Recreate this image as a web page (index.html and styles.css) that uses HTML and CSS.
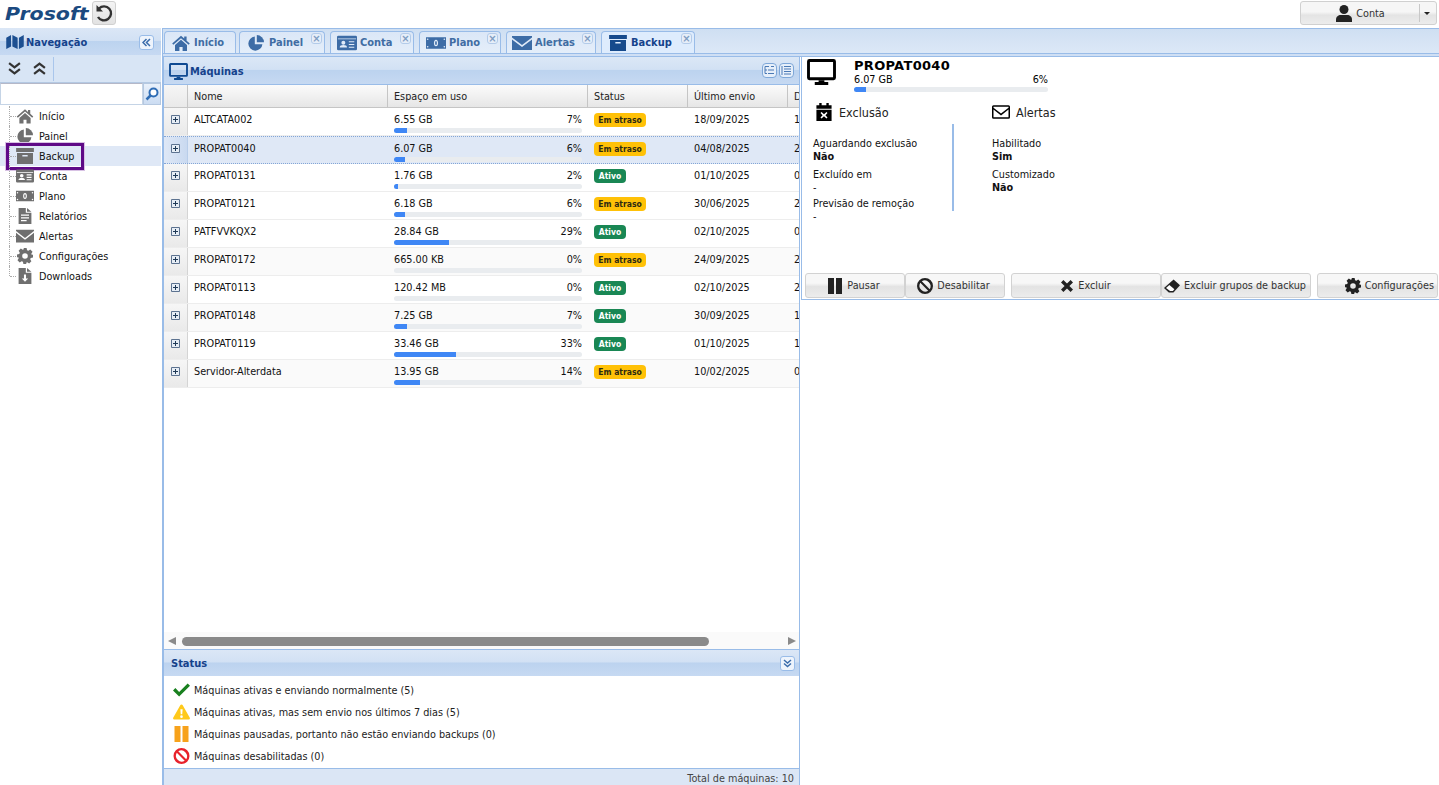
FILE: index.html
```html
<!DOCTYPE html>
<html lang="pt-BR">
<head>
<meta charset="utf-8">
<title>Prosoft Backup</title>
<link rel="stylesheet" href="styles.css">
</head>
<body>
<svg class="defs" width="0" height="0" aria-hidden="true">
  <symbol id="i-home" viewBox="0 0 24 20"><path d="M12 1 1 10.500l1.400 1.700L12 4l9.600 8.200 1.400-1.700-4-3.400V2h-3v2.500z"/><path d="M4.500 12.500 12 6l7.500 6.500V20H14v-5h-4v5H4.500z"/></symbol>
  <symbol id="i-pie" viewBox="0 0 20 20"><path d="M8.500 2a8.800 8.800 0 1 0 9.500 9.500H8.500z"/><path d="M11 0v9h9a9.200 9.200 0 0 0-9-9z"/></symbol>
  <symbol id="i-card" viewBox="0 0 22 16"><path fill-rule="evenodd" d="M1.500 0h19A1.500 1.500 0 0 1 22 1.500v13a1.500 1.500 0 0 1-1.500 1.500h-19A1.500 1.500 0 0 1 0 14.500v-13A1.500 1.500 0 0 1 1.500 0zM1 3v1h20V3zm6 2.500a2.200 2.200 0 1 0 0 4.400 2.200 2.200 0 0 0 0-4.400zM3 13h8c0-2-1.500-2.700-4-2.700S3 11 3 13zm10-7v1.300h6V6zm0 3v1.300h6V9zm0 3v1.300h6V12z"/></symbol>
  <symbol id="i-money" viewBox="0 0 24 14"><path fill-rule="evenodd" d="M0 0h24v14H0zm2 1.500a1 1 0 1 0 0 2 1 1 0 0 0 0-2zm20 0a1 1 0 1 0 0 2 1 1 0 0 0 0-2zm-20 9a1 1 0 1 0 0 2 1 1 0 0 0 0-2zm20 0a1 1 0 1 0 0 2 1 1 0 0 0 0-2zM12 3c-1.600 0-2.500 1.700-2.500 4s.9 4 2.500 4 2.500-1.700 2.500-4-.9-4-2.500-4zm0 1.500c.6 0 1 1 1 2.500s-.4 2.500-1 2.500-1-1-1-2.500.4-2.500 1-2.500z"/></symbol>
  <symbol id="i-mail" viewBox="0 0 24 17"><path d="M0 0h24v1.800L12 11 0 1.800z"/><path d="M0 4.200V17h24V4.200L12 13.400z"/></symbol>
  <symbol id="i-mail-o" viewBox="0 0 24 18"><path fill-rule="evenodd" d="M2 0h20a2 2 0 0 1 2 2v14a2 2 0 0 1-2 2H2a2 2 0 0 1-2-2V2a2 2 0 0 1 2-2zm0 2v1.300l10 7.700 10-7.700V2zm0 3.800V16h20V5.800l-10 7.700z"/></symbol>
  <symbol id="i-box" viewBox="0 0 20 18"><path d="M0 0h20v4.500H0z"/><path fill-rule="evenodd" d="M1 5.500h18V18H1zm6 2.500v1.600h6V8z"/></symbol>
  <symbol id="i-desktop" viewBox="0 0 30 27"><path fill-rule="evenodd" d="M2.500 0h25A2.500 2.500 0 0 1 30 2.500v17a2.500 2.500 0 0 1-2.500 2.500h-25A2.500 2.500 0 0 1 0 19.500v-17A2.500 2.500 0 0 1 2.500 0zM3 3v16h24V3z"/><path d="M12 22h6v2h4v3H8v-3h4z"/></symbol>
  <symbol id="i-map" viewBox="0 0 20 16"><path d="M0 3 5.500 0v13L0 16zM7 0l6 3v13l-6-3zM14.500 3 20 0v13l-5.500 3z"/></symbol>
  <symbol id="i-report" viewBox="0 0 16 20"><path fill-rule="evenodd" d="M0 0h9v6h7v14H0zm3 8v1.600h10V8zm0 3.500v1.600h10v-1.600zM3 15v1.600h7V15z"/><path d="M10.500 0 16 4.800h-5.500z"/></symbol>
  <symbol id="i-down" viewBox="0 0 16 20"><path fill-rule="evenodd" d="M0 0h9v6h7v14H0zm6.700 8v5H4l4 4.300 4-4.300H9.300V8z"/><path d="M10.500 0 16 4.800h-5.500z"/></symbol>
  <symbol id="i-gear" viewBox="0 0 20 20"><path fill-rule="evenodd" d="M8 0h4l.6 2.800 1.600.7 2.400-1.500 2.800 2.800-1.500 2.400.7 1.600L20 8v4l-2.800.6-.7 1.600 1.500 2.400-2.800 2.800-2.400-1.500-1.600.7L12 20H8l-.6-2.800-1.600-.7L3.400 18l-2.800-2.800 1.500-2.400-.7-1.600L0 12V8l2.800-.6.7-1.600L2 3.400 4.800.6l2.400 1.500 1.600-.7zM10 6.500a3.500 3.500 0 1 0 0 7 3.500 3.500 0 0 0 0-7z"/></symbol>
  <symbol id="i-cal" viewBox="0 0 16 19"><path d="M3 0h2.500v2.500h5V0H13v2.500h3V6H0V2.500h3z"/><path fill-rule="evenodd" d="M0 7h16v12H0zM5.400 9.500 4.300 10.600 6.500 12.900l-2.200 2.300 1.100 1.100L8 14l2.600 2.300 1.100-1.100-2.200-2.300 2.200-2.300-1.100-1.100L8 11.800z"/></symbol>
  <symbol id="i-pause" viewBox="0 0 16 16"><path d="M1 0h6v16H1zM9 0h6v16H9z"/></symbol>
  <symbol id="i-ban" viewBox="0 0 18 18"><path fill-rule="evenodd" d="M9 0a9 9 0 1 1 0 18A9 9 0 0 1 9 0zM3.700 5.400A6.500 6.500 0 0 0 12.600 14.300zM5.400 3.700l8.900 8.900A6.500 6.500 0 0 0 5.400 3.700z"/></symbol>
  <symbol id="i-x" viewBox="0 0 14 14"><path d="M2.800 0 7 4.200 11.200 0 14 2.800 9.800 7l4.200 4.200-2.800 2.800L7 9.800 2.800 14 0 11.200 4.200 7 0 2.800z"/></symbol>
  <symbol id="i-eraser" viewBox="0 0 20 16"><path d="M12 0 20 7l-8.200 9H6L0 10.500z"/><path fill="#fff" d="M7.600 14.400h3.500l1.900-2.200-6.300-5.300-4.200 3.700z"/></symbol>
  <symbol id="i-user" viewBox="0 0 16 17"><circle cx="8" cy="4.500" r="4.500"/><path d="M0 17v-2.500C0 11.500 2.500 10 4.500 10h7c2 0 4.500 1.500 4.500 4.500V17z"/></symbol>
  <symbol id="i-check" viewBox="0 0 18 14"><path d="M6.500 14 0 7.500l2.500-2.500 4 4L15.500 0 18 2.500z"/></symbol>
  <symbol id="i-warn" viewBox="0 0 18 16"><path fill-rule="evenodd" d="M9 0c.6 0 1 .3 1.300.8l7.500 13.300c.4.800-.1 1.900-1.200 1.900H1.400C.3 16-.2 14.900.2 14.100L7.700.8C8 .3 8.400 0 9 0zM7.800 5l.4 5.500h1.600l.4-5.500zM9 11.500a1.400 1.400 0 1 0 0 2.800 1.400 1.400 0 0 0 0-2.800z"/></symbol>
  <symbol id="i-plus" viewBox="0 0 9 9"><path fill="#e6edf5" stroke="#5d7390" d="M.5.500h8v8h-8z"/><path fill="#1f3a57" d="M2 4h2V2h1v2h2v1H5v2H4V5H2z"/></symbol>
  <symbol id="i-dbl-left" viewBox="0 0 9 9"><path fill="none" stroke="currentColor" stroke-width="1.500" d="M4.500 1 1 4.500 4.500 8M8 1 4.500 4.500 8 8"/></symbol>
  <symbol id="i-dbl-down" viewBox="0 0 9 9"><path fill="none" stroke="currentColor" stroke-width="1.500" d="M1 1l3.500 3L8 1M1 4.500l3.500 3 3.500-3"/></symbol>
</svg>

<div class="app">
  <header class="topbar">
    <span class="logo">Prosoft</span>
    <button class="refresh" aria-label="Atualizar">
      <svg viewBox="0 0 20 20" width="20" height="20"><path d="M5 5.500A7 7 0 1 1 4 14" fill="none" stroke="#333" stroke-width="2.400"/><path fill="#333" d="M2.500 2v6.500H9z"/></svg>
    </button>
    <div class="account">
      <span class="account-main"><svg class="ic16"><use href="#i-user"/></svg>Conta</span>
      <span class="account-caret"></span>
    </div>
  </header>

  <div class="workspace">
    <aside class="nav">
      <div class="panel-head nav-head">
        <svg class="nav-map"><use href="#i-map"/></svg>
        <span class="head-title">Navegação</span>
        <span class="tool-btn"><svg class="tool-ic"><use href="#i-dbl-left"/></svg></span>
      </div>
      <div class="nav-tools">
        <svg class="chev" viewBox="0 0 12 12"><path d="M1 1l5 4 5-4M1 6.500l5 4 5-4" fill="none" stroke="#333" stroke-width="2"/></svg>
        <svg class="chev" viewBox="0 0 12 12"><path d="M1 5.500l5-4 5 4M1 11l5-4 5 4" fill="none" stroke="#333" stroke-width="2"/></svg>
        <span class="nav-sep"></span>
      </div>
      <div class="search">
        <span class="search-input"></span>
        <span class="search-btn"><svg viewBox="0 0 14 14" width="14" height="14"><circle cx="8.500" cy="5.500" r="4" fill="#fff" stroke="#2f6db5" stroke-width="2"/><path d="M5.500 8.500 1.500 12.500" stroke="#2f6db5" stroke-width="2.500"/></svg></span>
      </div>
      <ul class="tree">
        <li class="tree-row"><svg class="tree-ic"><use href="#i-home"/></svg>Início</li>
        <li class="tree-row"><svg class="tree-ic"><use href="#i-pie"/></svg>Painel</li>
        <li class="tree-row is-active"><svg class="tree-ic"><use href="#i-box"/></svg>Backup<span class="highlight"></span></li>
        <li class="tree-row"><svg class="tree-ic"><use href="#i-card"/></svg>Conta</li>
        <li class="tree-row"><svg class="tree-ic"><use href="#i-money"/></svg>Plano</li>
        <li class="tree-row"><svg class="tree-ic"><use href="#i-report"/></svg>Relatórios</li>
        <li class="tree-row"><svg class="tree-ic"><use href="#i-mail"/></svg>Alertas</li>
        <li class="tree-row"><svg class="tree-ic"><use href="#i-gear"/></svg>Configurações</li>
        <li class="tree-row is-last"><svg class="tree-ic"><use href="#i-down"/></svg>Downloads</li>
      </ul>
    </aside>

    <main class="main">
      <nav class="tabs">
        <div class="tab t-inicio"><svg class="tab-ic"><use href="#i-home"/></svg>Início</div>
        <div class="tab t-painel"><svg class="tab-ic"><use href="#i-pie"/></svg>Painel<span class="tab-x"></span></div>
        <div class="tab t-conta"><svg class="tab-ic"><use href="#i-card"/></svg>Conta<span class="tab-x"></span></div>
        <div class="tab t-plano"><svg class="tab-ic"><use href="#i-money"/></svg>Plano<span class="tab-x"></span></div>
        <div class="tab t-alertas"><svg class="tab-ic"><use href="#i-mail"/></svg>Alertas<span class="tab-x"></span></div>
        <div class="tab t-backup is-active"><svg class="tab-ic"><use href="#i-box"/></svg>Backup<span class="tab-x"></span></div>
      </nav>
      <div class="tab-strip"></div>
      <div class="content">
        <section class="machines">
          <div class="panel-head list-head">
            <svg class="head-ic"><use href="#i-desktop"/></svg>
            <span class="head-title">Máquinas</span>
            <span class="view-btns">
              <span class="view-btn"><svg viewBox="0 0 11 11" width="11" height="11"><path d="M1 1.500h4M1 1.500v7M1 5h2m1 0h6M1 8.500h2m1 0h6M7 1.500h3" fill="none" stroke="#4a79b5"/></svg></span>
              <span class="view-btn"><svg viewBox="0 0 11 11" width="11" height="11"><path d="M1 1v9M3 1.500h7M3 4h7M3 6.500h7M3 9h7" fill="none" stroke="#4a79b5"/></svg></span>
            </span>
          </div>
          <div class="grid">
            <div class="grid-row grid-header">
              <div class="cell-exp"></div>
              <div class="hcell">Nome</div>
              <div class="hcell">Espaço em uso</div>
              <div class="hcell">Status</div>
              <div class="hcell">Último envio</div>
              <div class="hcell">D</div>
            </div>

            <div class="grid-row">
              <div class="cell-exp"><svg class="plus"><use href="#i-plus"/></svg></div>
              <div class="cell">ALTCATA002</div>
              <div class="cell"><div class="usage"><span>6.55 GB</span><span>7%</span></div><div class="bar"><div class="fill" style="width:7%"></div></div></div>
              <div class="cell"><span class="badge late">Em atraso</span></div>
              <div class="cell">18/09/2025</div>
              <div class="cell">1</div>
            </div>
            <div class="grid-row is-selected">
              <div class="cell-exp"><svg class="plus"><use href="#i-plus"/></svg></div>
              <div class="cell">PROPAT0040</div>
              <div class="cell"><div class="usage"><span>6.07 GB</span><span>6%</span></div><div class="bar"><div class="fill" style="width:6%"></div></div></div>
              <div class="cell"><span class="badge late">Em atraso</span></div>
              <div class="cell">04/08/2025</div>
              <div class="cell">2</div>
            </div>
            <div class="grid-row">
              <div class="cell-exp"><svg class="plus"><use href="#i-plus"/></svg></div>
              <div class="cell">PROPAT0131</div>
              <div class="cell"><div class="usage"><span>1.76 GB</span><span>2%</span></div><div class="bar"><div class="fill" style="width:2%"></div></div></div>
              <div class="cell"><span class="badge ok">Ativo</span></div>
              <div class="cell">01/10/2025</div>
              <div class="cell">0</div>
            </div>
            <div class="grid-row">
              <div class="cell-exp"><svg class="plus"><use href="#i-plus"/></svg></div>
              <div class="cell">PROPAT0121</div>
              <div class="cell"><div class="usage"><span>6.18 GB</span><span>6%</span></div><div class="bar"><div class="fill" style="width:6%"></div></div></div>
              <div class="cell"><span class="badge late">Em atraso</span></div>
              <div class="cell">30/06/2025</div>
              <div class="cell">2</div>
            </div>
            <div class="grid-row">
              <div class="cell-exp"><svg class="plus"><use href="#i-plus"/></svg></div>
              <div class="cell">PATFVVKQX2</div>
              <div class="cell"><div class="usage"><span>28.84 GB</span><span>29%</span></div><div class="bar"><div class="fill" style="width:29%"></div></div></div>
              <div class="cell"><span class="badge ok">Ativo</span></div>
              <div class="cell">02/10/2025</div>
              <div class="cell">0</div>
            </div>
            <div class="grid-row">
              <div class="cell-exp"><svg class="plus"><use href="#i-plus"/></svg></div>
              <div class="cell">PROPAT0172</div>
              <div class="cell"><div class="usage"><span>665.00 KB</span><span>0%</span></div><div class="bar"><div class="fill" style="width:0"></div></div></div>
              <div class="cell"><span class="badge late">Em atraso</span></div>
              <div class="cell">24/09/2025</div>
              <div class="cell">2</div>
            </div>
            <div class="grid-row">
              <div class="cell-exp"><svg class="plus"><use href="#i-plus"/></svg></div>
              <div class="cell">PROPAT0113</div>
              <div class="cell"><div class="usage"><span>120.42 MB</span><span>0%</span></div><div class="bar"><div class="fill" style="width:0"></div></div></div>
              <div class="cell"><span class="badge ok">Ativo</span></div>
              <div class="cell">02/10/2025</div>
              <div class="cell">2</div>
            </div>
            <div class="grid-row">
              <div class="cell-exp"><svg class="plus"><use href="#i-plus"/></svg></div>
              <div class="cell">PROPAT0148</div>
              <div class="cell"><div class="usage"><span>7.25 GB</span><span>7%</span></div><div class="bar"><div class="fill" style="width:7%"></div></div></div>
              <div class="cell"><span class="badge ok">Ativo</span></div>
              <div class="cell">30/09/2025</div>
              <div class="cell">1</div>
            </div>
            <div class="grid-row">
              <div class="cell-exp"><svg class="plus"><use href="#i-plus"/></svg></div>
              <div class="cell">PROPAT0119</div>
              <div class="cell"><div class="usage"><span>33.46 GB</span><span>33%</span></div><div class="bar"><div class="fill" style="width:33%"></div></div></div>
              <div class="cell"><span class="badge ok">Ativo</span></div>
              <div class="cell">01/10/2025</div>
              <div class="cell">1</div>
            </div>
            <div class="grid-row">
              <div class="cell-exp"><svg class="plus"><use href="#i-plus"/></svg></div>
              <div class="cell">Servidor-Alterdata</div>
              <div class="cell"><div class="usage"><span>13.95 GB</span><span>14%</span></div><div class="bar"><div class="fill" style="width:14%"></div></div></div>
              <div class="cell"><span class="badge late">Em atraso</span></div>
              <div class="cell">10/02/2025</div>
              <div class="cell">0</div>
            </div>
          </div>
          <div class="hscroll">
            <span class="arrow-l"></span>
            <span class="thumb"></span>
            <span class="arrow-r"></span>
          </div>
          <div class="panel-head status-head">
            <span class="head-title">Status</span>
            <span class="tool-btn"><svg class="tool-ic"><use href="#i-dbl-down"/></svg></span>
          </div>
          <ul class="legend">
            <li><svg class="lg-ic c-green"><use href="#i-check"/></svg>Máquinas ativas e enviando normalmente (5)</li>
            <li><svg class="lg-ic c-yellow"><use href="#i-warn"/></svg>Máquinas ativas, mas sem envio nos últimos 7 dias (5)</li>
            <li><svg class="lg-ic c-orange"><use href="#i-pause"/></svg>Máquinas pausadas, portanto não estão enviando backups (0)</li>
            <li><svg class="lg-ic c-red"><use href="#i-ban"/></svg>Máquinas desabilitadas (0)</li>
          </ul>
          <div class="total">Total de máquinas: 10</div>
        </section>

        <div class="detail-col">
          <section class="detail">
            <div class="detail-top">
              <svg class="detail-monitor"><use href="#i-desktop"/></svg>
              <div class="detail-summary">
                <div class="detail-name">PROPAT0040</div>
                <div class="usage"><span>6.07 GB</span><span>6%</span></div>
                <div class="bar"><div class="fill" style="width:6%"></div></div>
              </div>
            </div>
            <div class="detail-cols">
              <div class="dcol dcol-left">
                <h3 class="dhead"><svg class="dhead-ic"><use href="#i-cal"/></svg>Exclusão</h3>
                <div class="dlist">
                  <div class="ditem"><div>Aguardando exclusão</div><strong>Não</strong></div>
                  <div class="ditem"><div>Excluído em</div><div>-</div></div>
                  <div class="ditem"><div>Previsão de remoção</div><div>-</div></div>
                </div>
              </div>
              <div class="dcol dcol-right">
                <h3 class="dhead"><svg class="dhead-ic mail"><use href="#i-mail-o"/></svg>Alertas</h3>
                <div class="dlist">
                  <div class="ditem"><div>Habilitado</div><strong>Sim</strong></div>
                  <div class="ditem"><div>Customizado</div><strong>Não</strong></div>
                </div>
              </div>
            </div>
            <div class="actions">
              <button class="btn b-pause"><svg class="btn-ic"><use href="#i-pause"/></svg>Pausar</button>
              <button class="btn b-dis"><svg class="btn-ic"><use href="#i-ban"/></svg>Desabilitar</button>
              <button class="btn b-del"><svg class="btn-ic small"><use href="#i-x"/></svg>Excluir</button>
              <button class="btn b-grp"><svg class="btn-ic"><use href="#i-eraser"/></svg>Excluir grupos de backup</button>
              <button class="btn b-cfg"><svg class="btn-ic"><use href="#i-gear"/></svg>Configurações</button>
            </div>
          </section>
        </div>
      </div>
    </main>
  </div>
</div>
</body>
</html>
```
FILE: styles.css
```css
* { box-sizing: border-box; }
html, body { margin: 0; padding: 0; height: 100%; overflow: hidden; background: #fff; }
body { font: 10.750px/13px "DejaVu Sans Condensed", "DejaVu Sans", sans-serif; color: #000; }
ul { list-style: none; margin: 0; padding: 0; }
h3 { margin: 0; font-weight: normal; }
button { font: inherit; margin: 0; cursor: pointer; }
svg { fill: currentColor; display: block; flex: none; }
.defs { position: absolute; }

.app { height: 785px; display: flex; flex-direction: column; }

/* top bar */
.topbar { height: 28px; display: flex; align-items: center; padding-left: 5px; flex: none; }
.logo { font: italic bold 18px/28px "DejaVu Sans", sans-serif; color: #1b4a80; width: 87px; transform: scaleX(1.140); transform-origin: left center; }
.refresh { width: 24px; height: 24px; padding: 1px; margin-top: -2px; background: linear-gradient(#f4f4f4, #e2e2e2); border: 1px solid #d0d0d0; border-radius: 3px; display: flex; align-items: center; justify-content: center; }
.account { margin-left: auto; margin-right: 2px; width: 137px; height: 24px; margin-top: -2px; display: flex; align-items: center; background: linear-gradient(#f6f6f6 0 45%, #e4e4e4 60%, #ececec); border: 1px solid #d0d0d0; border-radius: 3px; color: #333; }
.account-main { flex: 1; display: flex; justify-content: center; align-items: center; gap: 4px; border-right: 1px solid #c8c8c8; height: 18px; padding-left: 1px; }
.ic16 { width: 16px; height: 17px; color: #222; }
.account-caret { width: 16px; position: relative; height: 18px; }
.account-caret::after { content: ""; position: absolute; left: 4px; top: 8px; border: 3px solid transparent; border-top: 3px solid #222; border-bottom: 0; width: 0; }

.workspace { flex: 1; display: flex; min-height: 0; }

/* shared panel header */
.panel-head { display: flex; align-items: center; background: linear-gradient(#dbe7f6 0, #d2e1f4 46%, #bcd3ef 50%, #c6d9f2 100%); flex: none; }
.head-title { font-weight: bold; font-size: 11px; color: #15428b; }
.tool-btn { width: 15px; height: 15px; margin-left: auto; border: 1px solid #99bce8; border-radius: 3px; background: #eef4fc; color: #3a6cab; display: flex; align-items: center; justify-content: center; }
.tool-ic { width: 9px; height: 9px; fill: none; }

/* navigation */
.nav { width: 161px; flex: none; display: flex; flex-direction: column; }
.nav-head { height: 27px; padding: 1px 7px 0 6px; }
.nav-map { width: 18px; height: 14px; margin-right: 2px; color: #1c4f91; }
.nav-tools { height: 28px; display: flex; align-items: center; background: #d8e5f5; padding-left: 8px; gap: 12px; border-bottom: 1px solid #b4c9e3; }
.chev { width: 13px; height: 13px; fill: none; }
.nav-sep { width: 1px; height: 24px; background: #a9c6ec; margin-left: -5px; }
.search { height: 22px; display: flex; background: #fff; }
.search-input { flex: 1; border: 1px solid #c5d4e6; border-top-color: #b5b8c8; }
.search-btn { width: 18px; display: flex; align-items: center; justify-content: center; background: linear-gradient(#e9f1fb, #cbdcf2); border: 1px solid #b5c8e0; }
.tree { padding-top: 1px; }
.tree-row { height: 20px; display: flex; align-items: center; color: #111; padding-left: 16px; position: relative; }
.tree-row::before { content: ""; position: absolute; left: 9px; top: 0; bottom: 0; border-left: 1px dotted #aaa; }
.tree-row::after { content: ""; position: absolute; left: 10px; top: 10px; width: 6px; border-top: 1px dotted #aaa; }
.tree-row.is-last::before { bottom: 10px; }
.tree-row.is-active { background: #dfe8f6; }
.tree-ic { width: 18px; height: 16px; margin-right: 5px; color: #6f6f6f; }
.highlight { position: absolute; left: 6px; top: -3px; width: 78px; height: 27px; border: 3px solid #5f0a87; outline: 1px solid #d8c2e4; }

/* main */
.main { flex: 1; min-width: 0; display: flex; flex-direction: column; margin-left: 1px; background: #fff; }
.tabs { height: 25px; flex: none; display: flex; padding: 2px 0 0 1px; background: linear-gradient(#cfdff2, #dce8f7); border-top: 1px solid #99bce8; border-left: 1px solid #99bce8; }
.tab { height: 22px; display: flex; align-items: center; border: 1px solid #99bce8; border-bottom: 0; border-radius: 4px 4px 0 0; background: linear-gradient(#dbe7f7, #e4eefa); color: #416da3; font-weight: bold; font-size: 11px; position: relative; margin-right: 5px; }
.tab.is-active { background: #deecfd; color: #15428b; }
.t-inicio { width: 72px; margin-right: 3px; padding-left: 6px; }
.t-painel { width: 86px; padding-left: 6px; }
.t-conta { width: 84px; padding-left: 6px; }
.t-plano { width: 82px; padding-left: 6px; }
.t-alertas { width: 90px; padding-left: 5px; }
.t-backup { width: 94px; padding-left: 6px; }
.tab-ic { width: 20px; height: 16px; margin-right: 3px; color: #3d6ca6; }
.is-active .tab-ic { color: #164a8c; }
.tab-x { position: absolute; right: 2px; top: 1px; width: 11px; height: 11px; border: 1px solid #b3cbe9; border-radius: 3px; background: #e6eef9; }
.tab-x::after { content: "×"; position: absolute; left: 0; top: 0; width: 9px; text-align: center; font: bold 10px/9px "DejaVu Sans", sans-serif; color: #7f9cc2; }
.tab-strip { height: 4px; flex: none; background: #cfdff4; border-top: 1px solid #99bce8; border-bottom: 1px solid #99bce8; border-left: 1px solid #99bce8; }
.content { flex: 1; min-height: 0; display: flex; }

/* machines */
.machines { width: 638px; flex: none; display: flex; flex-direction: column; border-left: 2px solid #99bce8; border-right: 1px solid #99bce8; }
.list-head { height: 28px; padding: 2px 5px 0 5px; border-bottom: 1px solid #99bce8; }
.head-ic { width: 19px; height: 17px; margin-right: 2px; color: #0f4a92; }
.view-btns { margin-left: auto; margin-top: -2px; display: flex; gap: 2px; }
.view-btn { width: 15px; height: 15px; border: 1px solid #7ea7d8; border-radius: 4px; background: #e6effa; display: flex; align-items: center; justify-content: center; }

.grid { flex: 1; min-height: 0; overflow: hidden; }
.grid-row { display: grid; grid-template-columns: 24px 200px 200px 100px 100px 100px; height: 28px; width: 724px; border-bottom: 1px solid #ededed; }
.grid-row:nth-child(2n+7) { background: #fafafa; }
.grid-header { height: 23px; background: linear-gradient(#fbfbfb, #e6e6e6); border-bottom: 1px solid #c5c5c5; }
.hcell { padding: 5px 6px 0; margin-left: -1px; border-left: 1px solid #c5c5c5; color: #222; }
.cell { padding: 5px 6px 0; color: #111; }
.cell-exp { background: linear-gradient(#f6f6f6, #e9e9e9); border-right: 1px solid #d4d4d4; }
.grid-header .cell-exp { border-right: 0; }
.plus { width: 9px; height: 9px; margin: 7px 0 0 7px; }
.is-selected { background: #dfe8f6; border-top: 1px dotted #84a6d6; border-bottom: 1px dotted #84a6d6; }
.is-selected .cell-exp { background: linear-gradient(90deg, #dfe8f6, #c9d9f0); border-right-color: #b8cde9; }
.usage { display: flex; justify-content: space-between; }
.bar { height: 5px; margin-top: 2px; border-radius: 3px; background: #e9ecef; overflow: hidden; }
.fill { height: 100%; background: #3f87f5; }
.badge { display: block; height: 14px; border-radius: 4px; font-size: 8.500px; font-weight: bold; line-height: 14px; text-align: center; }
.late { width: 52px; background: #ffc107; color: #2f2a12; }
.ok { width: 32px; background: #198754; color: #fff; }

.hscroll { height: 17px; flex: none; display: flex; align-items: center; background: #fafafa; padding: 1px 3px 0 4px; }
.arrow-l { border: 4px solid transparent; border-right: 8px solid #8a8a8a; border-left: 0; }
.thumb { width: 527px; height: 9px; margin-left: 6px; border-radius: 5px; background: #8a8a8a; }
.arrow-r { border: 4px solid transparent; border-left: 8px solid #8a8a8a; border-right: 0; margin-left: auto; }
.status-head { height: 27px; padding: 1px 4px 0 7px; border-top: 1px solid #99bce8; }
.legend { height: 92px; flex: none; padding: 3px 0 0 9px; }
.legend li { height: 22px; display: flex; align-items: center; color: #222; }
.lg-ic { width: 17px; height: 16px; margin-right: 4px; }
.c-green { color: #19801f; }
.c-yellow { color: #ffc91a; }
.c-orange { color: #f7a21b; }
.c-red { color: #e8222b; }
.total { height: 17px; flex: none; background: #dbe6f5; border-top: 1px solid #99bce8; text-align: right; padding: 3px 5px 0; color: #444; }

/* detail */
.detail-col { flex: 1; min-width: 0; padding-left: 1px; }
.detail { height: 243px; display: flex; flex-direction: column; border-left: 1px solid #99bce8; border-bottom: 1px solid #99bce8; padding: 2px 0 0 4px; }
.detail-top { display: flex; }
.detail-monitor { width: 29px; height: 26px; margin-left: 1px; color: #000; }
.detail-summary { width: 194px; margin-left: 18px; }
.detail-name { font: bold 13px/14px "DejaVu Sans", sans-serif; letter-spacing: .3px; }
.detail-summary .bar { margin-top: 1px; }
.detail-cols { display: flex; margin-top: 10px; }
.dcol-left { width: 140px; margin-left: 6px; }
.dcol-right { margin-left: 40px; }
.dhead { display: flex; align-items: center; font-size: 12.500px; height: 20px; color: #222; }
.dcol-left .dhead { padding-left: 4px; }
.dhead-ic { width: 16px; height: 18px; margin-right: 7px; color: #000; }
.dhead-ic.mail { width: 18px; height: 14px; margin-right: 6px; }
.dlist { margin-top: 2px; padding-top: 13px; height: 87px; }
.dcol-left .dlist { border-right: 2px solid #99bce8; margin-left: 1px; width: 141px; }
.ditem { margin-bottom: 5px; color: #111; }
.ditem:nth-child(2) { margin-bottom: 3px; }
.actions { margin: auto 0 0 -1px; height: 26px; display: flex; }
.btn { height: 25px; display: flex; align-items: center; justify-content: center; gap: 4px; background: linear-gradient(#f7f7f7 0 40%, #e3e3e3 55%, #ececec); border: 1px solid #d2d2d2; border-radius: 3px; padding: 0; color: #333; }
.b-pause { width: 100px; padding-right: 3px; }
.b-dis { width: 100px; padding-right: 3px; }
.b-del { width: 150px; margin-left: 6px; gap: 5px; }
.b-grp { width: 150px; padding-right: 2px; }
.b-cfg { width: 121px; margin-left: 6px; justify-content: flex-end; padding-right: 3px; }
.btn-ic { width: 16px; height: 16px; color: #222; }
.btn-ic.small { width: 12px; height: 12px; }
```
